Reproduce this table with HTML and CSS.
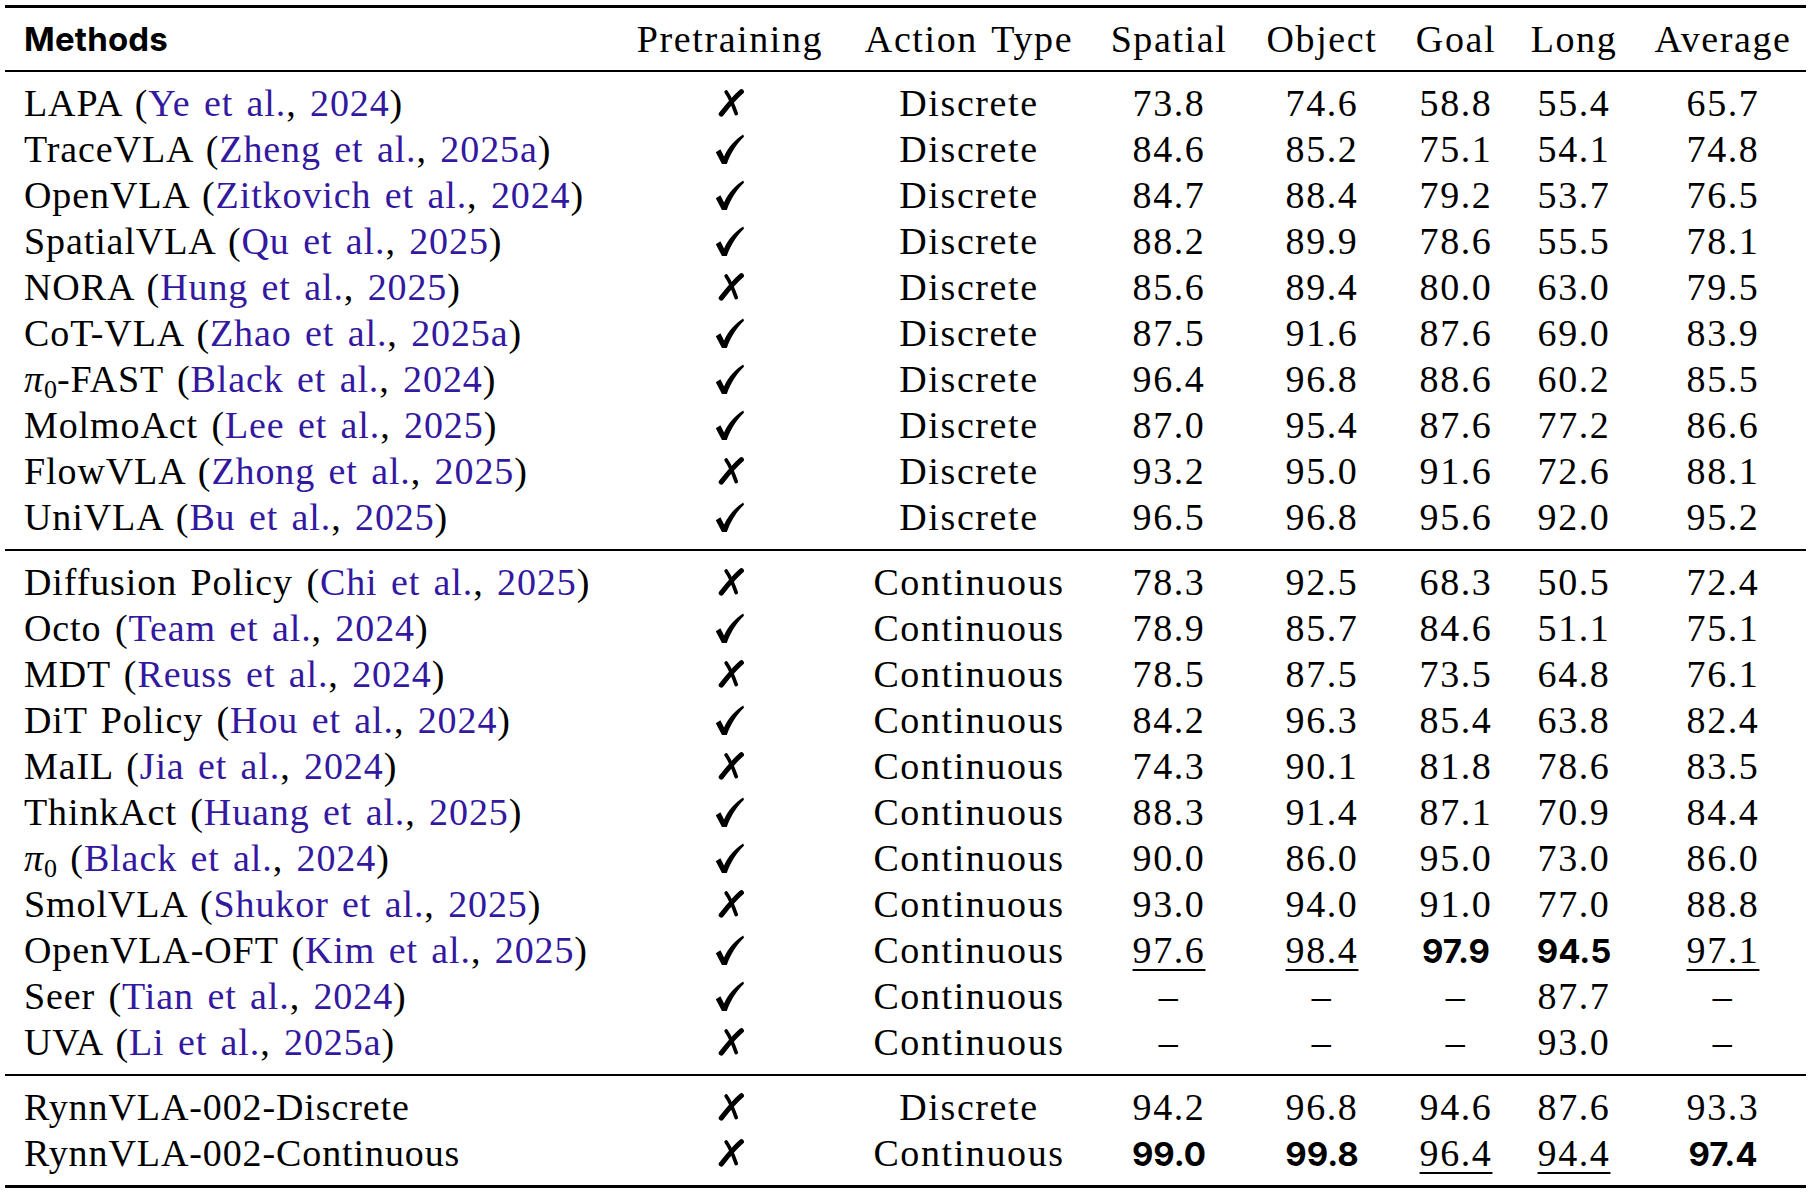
FILE: index.html
```html
<!DOCTYPE html>
<html>
<head>
<meta charset="utf-8">
<link rel="stylesheet" href="styles.css">
</head>
<body>
<svg class="defs" width="0" height="0" aria-hidden="true">
  <defs>
    <symbol id="yes" viewBox="0 0 30 32">
      <path d="M0.8 18.8 L5.6 15.8 L9.4 23.2 C14.2 13.2 20.6 6 29.2 0.6 L30 2.8 C23 9.2 16.8 18.4 12.2 31 L7.2 31 Z" fill="#000"/>
    </symbol>
    <symbol id="no" viewBox="0 0 28 30">
      <path d="M25.2 2.8 C18 9 10.5 18 3.5 27" fill="none" stroke="#000" stroke-width="5.4" stroke-linecap="round"/>
      <path d="M8.8 3.2 C12.2 8 15.2 14 19.6 26.4" fill="none" stroke="#000" stroke-width="4" stroke-linecap="round"/>
    </symbol>
  </defs>
</svg>
<table class="results">
  <colgroup>
    <col class="c-method"><col class="c-pre"><col class="c-act"><col class="c-sp"><col class="c-ob"><col class="c-go"><col class="c-lo"><col class="c-av">
  </colgroup>
  <thead>
    <tr><th class="method head-sans">Methods</th><th>Pretraining</th><th>Action Type</th><th>Spatial</th><th>Object</th><th>Goal</th><th>Long</th><th>Average</th></tr>
  </thead>
  <tbody>
    <tr><td class="method">LAPA <span class="cite">(<a>Ye et al.</a>, <a>2024</a>)</span></td><td class="mark"><svg class="no"><use href="#no"/></svg></td><td>Discrete</td><td>73.8</td><td>74.6</td><td>58.8</td><td>55.4</td><td>65.7</td></tr>
    <tr><td class="method">TraceVLA <span class="cite">(<a>Zheng et al.</a>, <a>2025a</a>)</span></td><td class="mark"><svg class="yes"><use href="#yes"/></svg></td><td>Discrete</td><td>84.6</td><td>85.2</td><td>75.1</td><td>54.1</td><td>74.8</td></tr>
    <tr><td class="method">OpenVLA <span class="cite">(<a>Zitkovich et al.</a>, <a>2024</a>)</span></td><td class="mark"><svg class="yes"><use href="#yes"/></svg></td><td>Discrete</td><td>84.7</td><td>88.4</td><td>79.2</td><td>53.7</td><td>76.5</td></tr>
    <tr><td class="method">SpatialVLA <span class="cite">(<a>Qu et al.</a>, <a>2025</a>)</span></td><td class="mark"><svg class="yes"><use href="#yes"/></svg></td><td>Discrete</td><td>88.2</td><td>89.9</td><td>78.6</td><td>55.5</td><td>78.1</td></tr>
    <tr><td class="method">NORA <span class="cite">(<a>Hung et al.</a>, <a>2025</a>)</span></td><td class="mark"><svg class="no"><use href="#no"/></svg></td><td>Discrete</td><td>85.6</td><td>89.4</td><td>80.0</td><td>63.0</td><td>79.5</td></tr>
    <tr><td class="method">CoT-VLA <span class="cite">(<a>Zhao et al.</a>, <a>2025a</a>)</span></td><td class="mark"><svg class="yes"><use href="#yes"/></svg></td><td>Discrete</td><td>87.5</td><td>91.6</td><td>87.6</td><td>69.0</td><td>83.9</td></tr>
    <tr><td class="method"><i class="pi">π</i><sub>0</sub>-FAST <span class="cite">(<a>Black et al.</a>, <a>2024</a>)</span></td><td class="mark"><svg class="yes"><use href="#yes"/></svg></td><td>Discrete</td><td>96.4</td><td>96.8</td><td>88.6</td><td>60.2</td><td>85.5</td></tr>
    <tr><td class="method">MolmoAct <span class="cite">(<a>Lee et al.</a>, <a>2025</a>)</span></td><td class="mark"><svg class="yes"><use href="#yes"/></svg></td><td>Discrete</td><td>87.0</td><td>95.4</td><td>87.6</td><td>77.2</td><td>86.6</td></tr>
    <tr><td class="method">FlowVLA <span class="cite">(<a>Zhong et al.</a>, <a>2025</a>)</span></td><td class="mark"><svg class="no"><use href="#no"/></svg></td><td>Discrete</td><td>93.2</td><td>95.0</td><td>91.6</td><td>72.6</td><td>88.1</td></tr>
    <tr><td class="method">UniVLA <span class="cite">(<a>Bu et al.</a>, <a>2025</a>)</span></td><td class="mark"><svg class="yes"><use href="#yes"/></svg></td><td>Discrete</td><td>96.5</td><td>96.8</td><td>95.6</td><td>92.0</td><td>95.2</td></tr>
  </tbody>
  <tbody>
    <tr><td class="method">Diffusion Policy <span class="cite">(<a>Chi et al.</a>, <a>2025</a>)</span></td><td class="mark"><svg class="no"><use href="#no"/></svg></td><td>Continuous</td><td>78.3</td><td>92.5</td><td>68.3</td><td>50.5</td><td>72.4</td></tr>
    <tr><td class="method">Octo <span class="cite">(<a>Team et al.</a>, <a>2024</a>)</span></td><td class="mark"><svg class="yes"><use href="#yes"/></svg></td><td>Continuous</td><td>78.9</td><td>85.7</td><td>84.6</td><td>51.1</td><td>75.1</td></tr>
    <tr><td class="method">MDT <span class="cite">(<a>Reuss et al.</a>, <a>2024</a>)</span></td><td class="mark"><svg class="no"><use href="#no"/></svg></td><td>Continuous</td><td>78.5</td><td>87.5</td><td>73.5</td><td>64.8</td><td>76.1</td></tr>
    <tr><td class="method">DiT Policy <span class="cite">(<a>Hou et al.</a>, <a>2024</a>)</span></td><td class="mark"><svg class="yes"><use href="#yes"/></svg></td><td>Continuous</td><td>84.2</td><td>96.3</td><td>85.4</td><td>63.8</td><td>82.4</td></tr>
    <tr><td class="method">MaIL <span class="cite">(<a>Jia et al.</a>, <a>2024</a>)</span></td><td class="mark"><svg class="no"><use href="#no"/></svg></td><td>Continuous</td><td>74.3</td><td>90.1</td><td>81.8</td><td>78.6</td><td>83.5</td></tr>
    <tr><td class="method">ThinkAct <span class="cite">(<a>Huang et al.</a>, <a>2025</a>)</span></td><td class="mark"><svg class="yes"><use href="#yes"/></svg></td><td>Continuous</td><td>88.3</td><td>91.4</td><td>87.1</td><td>70.9</td><td>84.4</td></tr>
    <tr><td class="method"><i class="pi">π</i><sub>0</sub> <span class="cite">(<a>Black et al.</a>, <a>2024</a>)</span></td><td class="mark"><svg class="yes"><use href="#yes"/></svg></td><td>Continuous</td><td>90.0</td><td>86.0</td><td>95.0</td><td>73.0</td><td>86.0</td></tr>
    <tr><td class="method">SmolVLA <span class="cite">(<a>Shukor et al.</a>, <a>2025</a>)</span></td><td class="mark"><svg class="no"><use href="#no"/></svg></td><td>Continuous</td><td>93.0</td><td>94.0</td><td>91.0</td><td>77.0</td><td>88.8</td></tr>
    <tr><td class="method">OpenVLA-OFT <span class="cite">(<a>Kim et al.</a>, <a>2025</a>)</span></td><td class="mark"><svg class="yes"><use href="#yes"/></svg></td><td>Continuous</td><td><span class="second">97.6</span></td><td><span class="second">98.4</span></td><td><b class="best">97.9</b></td><td><b class="best">94.5</b></td><td><span class="second">97.1</span></td></tr>
    <tr><td class="method">Seer <span class="cite">(<a>Tian et al.</a>, <a>2024</a>)</span></td><td class="mark"><svg class="yes"><use href="#yes"/></svg></td><td>Continuous</td><td>–</td><td>–</td><td>–</td><td>87.7</td><td>–</td></tr>
    <tr><td class="method">UVA <span class="cite">(<a>Li et al.</a>, <a>2025a</a>)</span></td><td class="mark"><svg class="no"><use href="#no"/></svg></td><td>Continuous</td><td>–</td><td>–</td><td>–</td><td>93.0</td><td>–</td></tr>
  </tbody>
  <tbody class="last">
    <tr><td class="method">RynnVLA-002-Discrete</td><td class="mark"><svg class="no"><use href="#no"/></svg></td><td>Discrete</td><td>94.2</td><td>96.8</td><td>94.6</td><td>87.6</td><td>93.3</td></tr>
    <tr><td class="method">RynnVLA-002-Continuous</td><td class="mark"><svg class="no"><use href="#no"/></svg></td><td>Continuous</td><td><b class="best">99.0</b></td><td><b class="best">99.8</b></td><td><span class="second">96.4</span></td><td><span class="second">94.4</span></td><td><b class="best">97.4</b></td></tr>
  </tbody>
</table>
</body>
</html>
```

FILE: styles.css
```css
html, body {
  margin: 0;
  padding: 0;
  background: #ffffff;
}

body {
  padding: 5px 0 0 5px;
  color: #000000;
  font-family: "Liberation Serif", "Times New Roman", serif;
  font-size: 38px;
  letter-spacing: 1.6px;
  word-spacing: 3px;
}

.defs {
  position: absolute;
  width: 0;
  height: 0;
  overflow: hidden;
}

.results {
  border-collapse: collapse;
  table-layout: fixed;
  width: 1801px;
}

.c-method { width: 615px; }
.c-pre { width: 220px; }
.c-act { width: 258px; }
.c-sp { width: 142px; }
.c-ob { width: 164px; }
.c-go { width: 104px; }
.c-lo { width: 132px; }
.c-av { width: 166px; }

.results th,
.results td {
  padding: 0;
  text-align: center;
  white-space: nowrap;
  font-weight: normal;
  height: 46px;
  line-height: 46px;
  vertical-align: middle;
}

.results .method {
  text-align: left;
  padding-left: 19px;
}

.results td.method {
  letter-spacing: 0.9px;
}

.results thead tr {
  border-top: 3px solid #000;
  border-bottom: 2px solid #000;
}

.results thead th {
  height: 62px;
  line-height: 62px;
}

.results .head-sans {
  font-family: "Inter", "Liberation Sans", sans-serif;
  font-weight: 700;
  font-size: 33px;
  letter-spacing: 0.2px;
}

.results tbody {
  border-bottom: 2px solid #000;
}

.results tbody.last {
  border-bottom: 3px solid #000;
}

.results tbody tr:first-child td {
  padding-top: 8px;
}

.results tbody tr:last-child td {
  padding-bottom: 9px;
}

.cite a {
  color: #3318a0;
}

.pi {
  font-style: italic;
}

sub {
  font-size: 26px;
  line-height: 0;
  vertical-align: -6px;
  letter-spacing: 0;
}

.mark svg {
  display: block;
  margin-left: auto;
  margin-right: auto;
}

.mark svg.yes {
  width: 29px;
  height: 31px;
  position: relative;
  left: -1px;
}

.mark svg.no {
  width: 26px;
  height: 28px;
  position: relative;
  left: 1px;
}

.best {
  font-family: "Inter", "Liberation Sans", sans-serif;
  font-weight: 700;
  font-size: 33px;
  letter-spacing: 0;
  line-height: 1;
}

.second {
  text-decoration: underline;
  text-decoration-thickness: 2px;
  text-underline-offset: 6px;
}
```
